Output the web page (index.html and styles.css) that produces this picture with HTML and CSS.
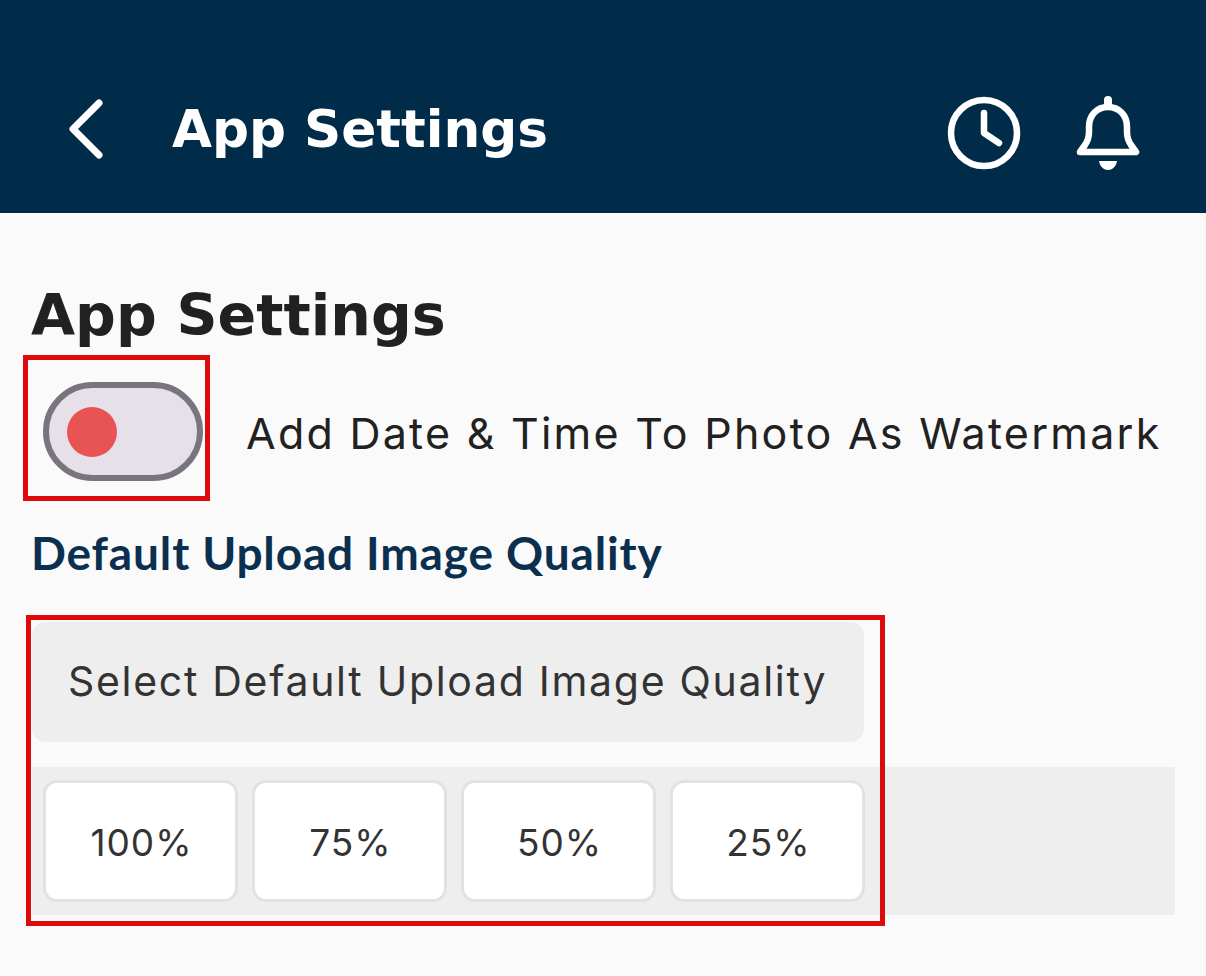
FILE: index.html
```html
<!DOCTYPE html>
<html lang="en">
<head>
    <meta charset="UTF-8">
    <meta name="viewport" content="width=device-width, initial-scale=1.0">
    <title>App Settings</title>
    <link rel="stylesheet" href="styles.css">
</head>
<body>
    <header class="top-bar">
        <svg class="back-icon" viewBox="0 0 36 60" fill="none" stroke="#fff" stroke-width="7" stroke-linecap="round" stroke-linejoin="round">
            <path d="M31 4 L5 30 L31 56"/>
        </svg>
        <div class="top-title">App Settings</div>
        <svg class="clock-icon" viewBox="0 0 74 74" fill="none" stroke="#fff" stroke-width="6.5" stroke-linecap="round" stroke-linejoin="round">
            <circle cx="37" cy="37" r="33"/>
            <path d="M37 17 V37 L52 47"/>
        </svg>
        <svg class="bell-icon" viewBox="0 0 64 74" fill="none" stroke="#fff" stroke-width="6.5" stroke-linecap="round" stroke-linejoin="round">
            <path d="M32 4 V10" stroke-width="8"/>
            <path d="M4 56 L9 49 Q13 43 13 36 V31 C13 19 21 11 32 11 C43 11 51 19 51 31 V36 Q51 43 55 49 L60 56 Z"/>
            <path d="M23 65 H41 C40 71 36 74 32 74 C28 74 24 71 23 65 Z" fill="#fff" stroke="none"/>
        </svg>
    </header>

    <main class="content">
        <h1>App Settings</h1>

        <div class="toggle-row">
            <div class="toggle"><span class="thumb"></span></div>
            <span class="toggle-label">Add Date &amp; Time To Photo As Watermark</span>
        </div>

        <h2>Default Upload Image Quality</h2>

        <div class="select-box">Select Default Upload Image Quality</div>

        <div class="options">
            <div class="option">100%</div>
            <div class="option">75%</div>
            <div class="option">50%</div>
            <div class="option">25%</div>
        </div>
    </main>

    <div class="mark mark-toggle"></div>
    <div class="mark mark-quality"></div>
</body>
</html>
```

FILE: styles.css
```css
* {
    box-sizing: border-box;
}

body {
    background-color: #fafafa;
    font-family: Inter, "Liberation Sans", sans-serif;
    margin: 0;
    height: 976px;
    overflow: hidden;
    position: relative;
}

.top-bar {
    background-color: #002b49;
    height: 213px;
    padding: 44px 66px 0 68px;
    display: flex;
    align-items: center;
}

.back-icon {
    width: 36px;
    height: 60px;
}

.top-title {
    color: #fff;
    font-family: "DejaVu Sans", sans-serif;
    font-size: 51.7px;
    font-weight: 700;
    margin-left: 68px;
    flex-grow: 1;
}

.clock-icon {
    width: 74px;
    height: 74px;
    margin-top: 9px;
}

.bell-icon {
    width: 64px;
    height: 74px;
    margin: 9px 0 0 55px;
}

.content {
    padding: 69px 31px 0 32px;
}

h1 {
    color: #212121;
    font-family: "DejaVu Sans", sans-serif;
    font-size: 57px;
    font-weight: 700;
    line-height: 66px;
    margin: 0 0 0 -1px;
}

.toggle-row {
    display: flex;
    align-items: center;
    margin: 34px 0 0 11px;
}

.toggle {
    width: 160px;
    height: 99px;
    border: 6px solid #79747e;
    border-radius: 50px;
    background-color: #e6e0e9;
    display: flex;
    align-items: center;
    padding-left: 18px;
}

.thumb {
    width: 50px;
    height: 50px;
    border-radius: 50%;
    background-color: #e85353;
}

.toggle-label {
    color: #212121;
    font-size: 43px;
    margin-left: 43px;
    padding-top: 2px;
    letter-spacing: 2.25px;
    white-space: nowrap;
}

h2 {
    color: #0b2f4e;
    font-family: Lato, sans-serif;
    font-size: 46px;
    font-weight: 700;
    line-height: 56px;
    letter-spacing: 0.85px;
    margin: 44px 0 0 -1px;
}

.select-box {
    width: 832px;
    height: 120px;
    margin-top: 41px;
    background-color: #eeeeee;
    border-radius: 14px;
    color: #333;
    font-size: 41px;
    letter-spacing: 1.7px;
    padding: 0 0 2px 36px;
    display: flex;
    align-items: center;
    white-space: nowrap;
}

.options {
    height: 148px;
    width: 1143px;
    margin-top: 25px;
    background-color: #eeeeee;
    padding: 13px 11px;
    display: flex;
    gap: 14px;
}

.option {
    width: 195px;
    height: 122px;
    background-color: #fff;
    border: 3px solid #e2e2e2;
    border-radius: 14px;
    color: #333;
    font-size: 37px;
    letter-spacing: 1px;
    padding: 2px 0 0 2px;
    display: flex;
    align-items: center;
    justify-content: center;
}

/* red annotation boxes drawn over the screen */
.mark {
    position: absolute;
    border: 5px solid #dc0a0a;
}

.mark-toggle {
    left: 23px;
    top: 355px;
    width: 187px;
    height: 146px;
}

.mark-quality {
    left: 26px;
    top: 615px;
    width: 859px;
    height: 311px;
}
```
